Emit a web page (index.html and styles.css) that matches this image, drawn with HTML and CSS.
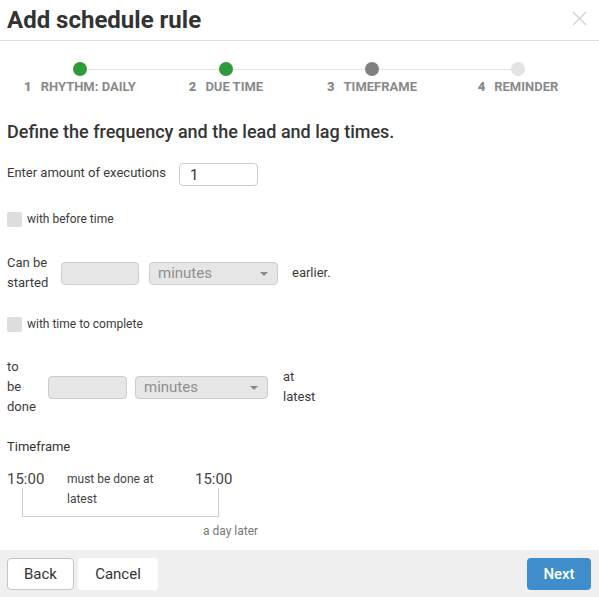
FILE: index.html
```html
<!DOCTYPE html>
<html lang="en">
    <head>
        <meta charset="UTF-8" />
        <meta name="viewport" content="width=device-width, initial-scale=1.0" />
        <title>Add schedule rule</title>
        <link rel="stylesheet" href="styles.css">
    </head>
    <body>
        <div class="dialog">
            <header class="dlg-head">
                <h1>Add schedule rule</h1>
                <button class="close" type="button" aria-label="Close">
                    <svg width="15" height="15" viewBox="0 0 15 15">
                        <path d="M1 1L14 14M14 1L1 14" stroke="#cfcfcf" stroke-width="1.2" fill="none" />
                    </svg>
                </button>
            </header>

            <div class="dlg-body">
                <ol class="steps">
                    <li class="step done"><span class="dot"></span><span class="step-label"><b>1</b>RHYTHM: DAILY</span></li>
                    <li class="step done"><span class="dot"></span><span class="step-label"><b>2</b>DUE TIME</span></li>
                    <li class="step current"><span class="dot"></span><span class="step-label"><b>3</b>TIMEFRAME</span></li>
                    <li class="step"><span class="dot"></span><span class="step-label"><b>4</b>REMINDER</span></li>
                </ol>

                <h2 class="lead">Define the frequency and the lead and lag times.</h2>

                <div class="exec-row">
                    <label class="exec-label" for="amount">Enter amount of executions</label>
                    <input class="field" id="amount" type="text" value="1">
                </div>

                <label class="check check-before"><span class="box"></span>with before time</label>

                <div class="offset-row row-before">
                    <span class="offset-label">Can be<br>started</span>
                    <span class="field field-off"></span>
                    <span class="select"><span>minutes</span><i class="caret"></i></span>
                    <span class="offset-tail">earlier.</span>
                </div>

                <label class="check check-after"><span class="box"></span>with time to complete</label>

                <div class="offset-row row-after">
                    <span class="offset-label">to<br>be<br>done</span>
                    <span class="field field-off"></span>
                    <span class="select"><span>minutes</span><i class="caret"></i></span>
                    <span class="offset-tail">at<br>latest</span>
                </div>

                <h3 class="tf-title">Timeframe</h3>
                <div class="tf">
                    <span class="tf-time tf-start">15:00</span>
                    <span class="tf-note">must be done at<br>latest</span>
                    <span class="tf-time">15:00</span>
                </div>
                <div class="tf-later">a day later</div>
            </div>

            <footer class="dlg-foot">
                <button class="btn btn-line" type="button">Back</button>
                <button class="btn btn-plain" type="button">Cancel</button>
                <button class="btn btn-primary" type="button">Next</button>
            </footer>
        </div>
    </body>
</html>
```

FILE: styles.css
```css
* {
    margin: 0;
    padding: 0;
    box-sizing: border-box;
}
body {
    background: #ffffff;
    font-family: Roboto, "Liberation Sans", Arial, sans-serif;
    color: #3b3b3b;
}
.dialog {
    display: flex;
    flex-direction: column;
    height: 597px;
}

/* header */
.dlg-head {
    display: flex;
    align-items: center;
    justify-content: space-between;
    height: 41px;
    padding: 0 12px 0 7px;
    border-bottom: 1px solid #dedede;
}
.dlg-head h1 {
    font-size: 24px;
    font-weight: 700;
    line-height: 40px;
    color: #333333;
}
.close {
    border: 0;
    background: none;
    width: 15px;
    height: 15px;
    margin-top: -4px;
}
.close svg {
    display: block;
}

.dlg-body {
    padding: 0 8px 0 7px;
}

/* stepper */
.steps {
    position: relative;
    display: grid;
    grid-template-columns: repeat(4, 1fr);
    list-style: none;
    margin-top: 21px;
}
.steps::before {
    content: "";
    position: absolute;
    left: 73px;
    right: 73px;
    top: 7px;
    border-top: 1px solid #e2e2e2;
}
.step {
    position: relative;
    display: flex;
    flex-direction: column;
    align-items: center;
}
.dot {
    width: 14px;
    height: 14px;
    border-radius: 50%;
    background: #e3e3e3;
}
.step.done .dot {
    background: #2f9a3c;
}
.step.current .dot {
    background: #808080;
}
.step-label {
    margin-top: 4px;
    font-size: 13px;
    line-height: 14px;
    font-weight: 700;
    color: #8a8a8a;
    white-space: nowrap;
}
.step-label b {
    margin-right: 9px;
}

.lead {
    margin-top: 28px;
    font-size: 18px;
    line-height: 20px;
    font-weight: 500;
    color: #353535;
}

/* executions */
.exec-row {
    display: flex;
    align-items: flex-start;
    gap: 13px;
    margin-top: 21px;
}
.exec-label {
    font-size: 13px;
    line-height: 20px;
}
.field {
    display: block;
    width: 79px;
    height: 23px;
    border: 1px solid #cccccc;
    border-radius: 4px;
    background: #ffffff;
    padding-left: 10px;
    font-family: inherit;
    font-size: 15px;
    color: #333333;
}
.field-off {
    background: #e6e6e6;
}

/* checkboxes */
.check {
    display: flex;
    align-items: center;
    gap: 5px;
    font-size: 12px;
    line-height: 15px;
    color: #3b3b3b;
}
.box {
    width: 15px;
    height: 15px;
    border-radius: 2px;
    background: #dddddd;
}
.check-before {
    margin-top: 26px;
}
.check-after {
    margin-top: 24px;
}

/* lead / lag rows */
.offset-row {
    display: flex;
    align-items: center;
}
.offset-label,
.offset-tail {
    font-size: 13px;
    line-height: 20px;
}
.select {
    position: relative;
    display: flex;
    align-items: center;
    height: 23px;
    padding-left: 8px;
    border: 1px solid #cccccc;
    border-radius: 4px;
    background: #e6e6e6;
    font-size: 15px;
    color: #8f8f8f;
}
.caret {
    position: absolute;
    right: 9px;
    top: 9px;
    border-left: 4px solid transparent;
    border-right: 4px solid transparent;
    border-top: 4px solid #888888;
}
.row-before {
    margin-top: 26px;
}
.row-before .offset-label {
    width: 54px;
}
.row-before .field {
    width: 78px;
}
.row-before .select {
    width: 129px;
    margin-left: 10px;
}
.row-before .offset-tail {
    margin-left: 14px;
}
.row-after {
    margin-top: 25px;
}
.row-after .offset-label {
    width: 41px;
}
.row-after .select {
    width: 133px;
    margin-left: 8px;
}
.row-after .offset-tail {
    margin-left: 15px;
}

/* timeframe */
.tf-title {
    margin-top: 20px;
    font-size: 13px;
    line-height: 20px;
    font-weight: 400;
    color: #333333;
}
.tf {
    position: relative;
    display: flex;
    align-items: flex-start;
    margin-top: 12px;
    height: 40px;
}
.tf::after {
    content: "";
    position: absolute;
    left: 15px;
    top: 19px;
    width: 195px;
    height: 28px;
    border: 1px solid #cfcfcf;
    border-top: 0;
}
.tf-time {
    font-size: 15px;
    line-height: 20px;
    color: #444444;
}
.tf-start {
    width: 60px;
}
.tf-note {
    width: 128px;
    font-size: 12px;
    line-height: 20px;
    color: #444444;
}
.tf-later {
    margin: 12px 0 0 196px;
    font-size: 12px;
    line-height: 20px;
    color: #777777;
}

/* footer */
.dlg-foot {
    display: flex;
    gap: 4px;
    margin-top: auto;
    height: 47px;
    padding: 8px 8px 0 7px;
    background: #efefef;
}
.btn {
    height: 32px;
    border-radius: 4px;
    border: 1px solid transparent;
    font-family: inherit;
    font-size: 15px;
    color: #333333;
    background: #ffffff;
}
.btn-line {
    width: 67px;
    border-color: #c4c4c4;
}
.btn-plain {
    width: 80px;
}
.btn-primary {
    width: 64px;
    margin-left: auto;
    background: #3f8dcb;
    color: #ffffff;
    font-weight: 500;
}
```
